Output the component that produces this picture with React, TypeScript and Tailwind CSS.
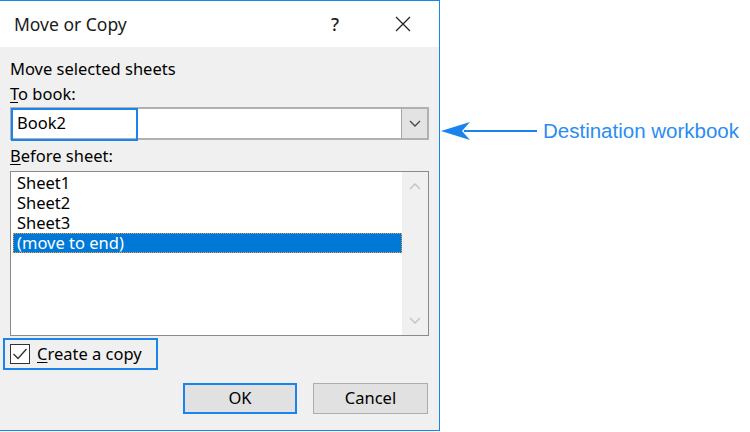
import React from "react";

const font = { fontFamily: '"Noto Sans", "Segoe UI", sans-serif' };

function Chevron({ up = false, color = "#555" }: { up?: boolean; color?: string }) {
  return (
    <svg width="12" height="8" viewBox="0 0 12 8" className="block">
      <path
        d={up ? "M1 7 L6 2 L11 7" : "M1 1 L6 6 L11 1"}
        fill="none"
        stroke={color}
        strokeWidth="1.3"
      />
    </svg>
  );
}

export default function App() {
  return (
    <div className="w-[750px] h-[432px] bg-white flex items-start overflow-hidden" style={font}>
      {/* Dialog */}
      <div className="w-[440px] h-[431px] border-t border-r border-b border-[#1a84ee] bg-[#f0f0f0] flex flex-col shrink-0">
        {/* Title bar */}
        <div className="h-[46px] bg-white flex items-center shrink-0">
          <div className="pl-[14px] text-[17.5px] text-[#1b1b1b] flex-1">Move or Copy</div>
          <div className="w-[20px] text-center text-[18px] font-medium text-[#1b1b1b] mr-[50px]">?</div>
          <div className="w-[16px] h-[16px] mr-[28px]">
            <svg width="16" height="16" viewBox="0 0 16 16" className="block">
              <path d="M1 1 L15 15 M15 1 L1 15" stroke="#222" strokeWidth="1.3" fill="none" />
            </svg>
          </div>
        </div>

        {/* Body */}
        <div className="flex flex-col pl-[10px] pr-[10px] text-[16.5px] text-black">
          <div className="h-[20px] leading-[20px] mt-[12px]">Move selected sheets</div>
          <div className="h-[20px] leading-[20px] mt-[5px]">
            <span className="underline underline-offset-2">T</span>o book:
          </div>

          {/* Combo */}
          <div className="relative mt-[3px] h-[33px] border-2 border-[#b0b0b0] bg-white flex items-stretch">
            <div className="flex-1 pl-[5px] flex items-center">Book2</div>
            <div className="w-[26px] bg-[#e3e3e3] border-l border-[#a5a5a5] flex items-center justify-center">
              <Chevron color="#444" />
            </div>
            <div className="absolute -left-[1px] -top-[1px] w-[127px] h-[33px] border-2 border-[#1a84ee]"></div>
          </div>

          <div className="h-[20px] leading-[20px] mt-[6px]">
            <span className="underline underline-offset-2">B</span>efore sheet:
          </div>

          {/* Listbox */}
          <div className="mt-[5px] h-[165px] border border-[#8a8a8a] bg-white flex">
            <div className="flex-1 pl-[2px] pt-[1px] flex flex-col">
              <div className="h-[20px] leading-[20px] pl-[4px]">Sheet1</div>
              <div className="h-[20px] leading-[20px] pl-[4px]">Sheet2</div>
              <div className="h-[20px] leading-[20px] pl-[4px]">Sheet3</div>
              <div className="h-[20px] leading-[18px] pl-[3px] bg-[#0078d7] text-white border border-dotted border-[#f0a040]">
                (move to end)
              </div>
            </div>
            <div className="w-[26px] bg-[#f0f0f0] flex flex-col items-center justify-between py-[10px]">
              <Chevron up color="#c2c2c2" />
              <Chevron color="#c2c2c2" />
            </div>
          </div>

          {/* Checkbox */}
          <div className="mt-[2px] -ml-[7px] w-[155px] h-[32px] border-2 border-[#1a84ee] flex items-center pl-[5px]">
            <div className="w-[20px] h-[20px] border border-[#333] bg-white flex items-center justify-center shrink-0">
              <svg width="16" height="14" viewBox="0 0 16 14" className="block">
                <path d="M1.5 7 L6 11.5 L14.5 2" fill="none" stroke="#333" strokeWidth="1.4" />
              </svg>
            </div>
            <div className="ml-[7px] whitespace-nowrap">
              <span className="underline underline-offset-2">C</span>reate a copy
            </div>
          </div>

          {/* Buttons */}
          <div className="mt-[13px] flex justify-end gap-[16px] pr-[1px]">
            <div className="w-[114px] h-[31px] border-2 border-[#1a84ee] bg-[#e1e1e1] flex items-center justify-center">
              OK
            </div>
            <div className="w-[115px] h-[31px] border border-[#adadad] bg-[#e1e1e1] flex items-center justify-center">
              Cancel
            </div>
          </div>
        </div>
      </div>

      {/* Annotation */}
      <div className="flex items-center mt-[116px]">
        <svg width="98" height="24" viewBox="0 0 98 24" className="block shrink-0">
          <path d="M1 12 L30 3 L22 12 L30 21 Z" fill="#1a84ee" />
          <path d="M24 12 L97 12" stroke="#1a84ee" strokeWidth="2.2" />
        </svg>
        <div
          className="ml-[5px] text-[20.5px] text-[#2a8cf2]"
          style={{ fontFamily: '"Liberation Sans", Arial, sans-serif' }}
        >
          Destination workbook
        </div>
      </div>
    </div>
  );
}
